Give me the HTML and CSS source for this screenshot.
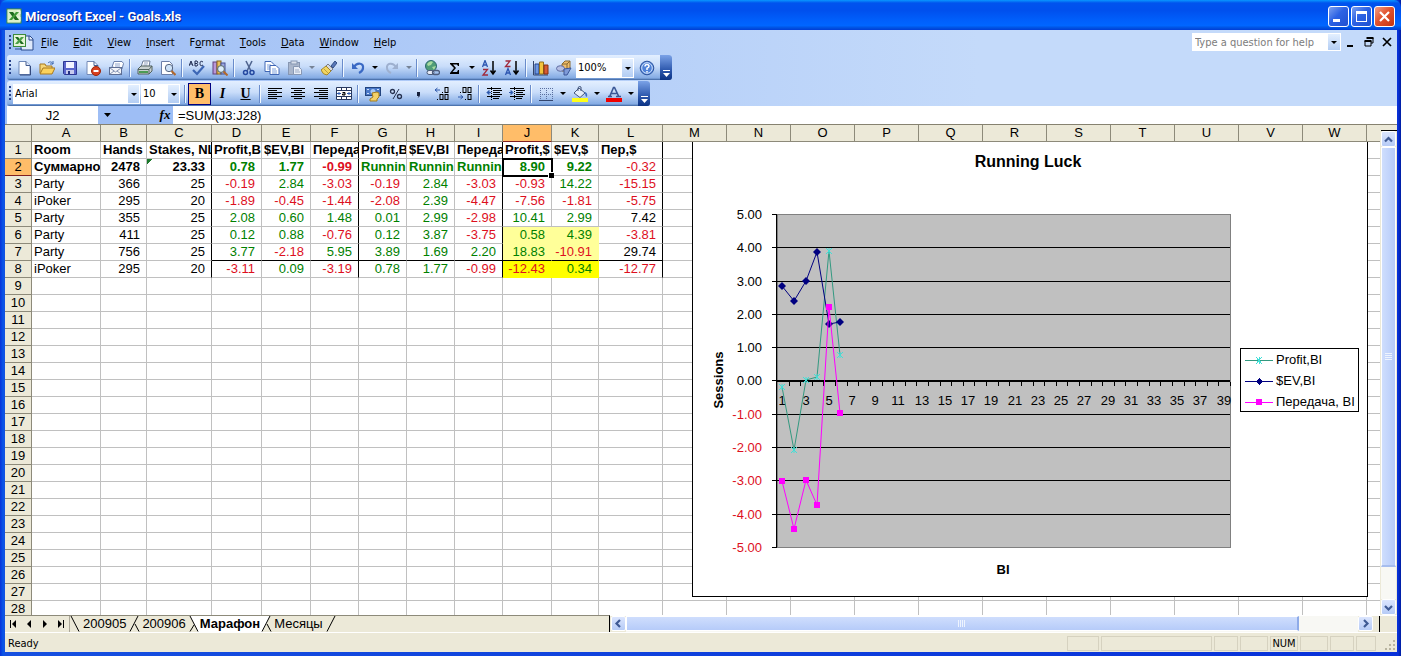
FILE: index.html
```html
<!DOCTYPE html>
<html lang="en">
<head>
<meta charset="utf-8">
<title>Microsoft Excel - Goals.xls</title>
<link rel="stylesheet" href="styles.css">
</head>
<body>
<div class="window">
  <header class="titlebar">
    <svg class="app-icon" viewBox="0 0 16 16"><rect x="1" y="1" width="14" height="14" fill="#fff" stroke="#3f8f3c"/><rect x="2" y="2" width="12" height="12" fill="#d8f0c8"/><path d="M3 4h4l6 8H9z" fill="#1d6b1f"/><path d="M10 4h3l-7 8H3z" fill="#3f9a3a"/><path d="M11 3h3v3M11 9h3v4" stroke="#f1f7e6" fill="none"/></svg>
    <h1 class="title">Microsoft Excel - Goals.xls</h1>
    <button class="winbtn" aria-label="Minimize"><svg viewBox="0 0 21 21"><path d="M5 13h7v3H5z" fill="#fff"/></svg></button>
    <button class="winbtn" aria-label="Maximize"><svg viewBox="0 0 21 21"><path d="M5 5h11v11H5zM6 8v7h9V8z" fill="#fff" fill-rule="evenodd"/></svg></button>
    <button class="winbtn close" aria-label="Close"><svg viewBox="0 0 21 21"><path d="M6 6l9 9M15 6l-9 9" stroke="#fff" stroke-width="2.2"/></svg></button>
  </header>

  <nav class="menubar">
    <span class="grip"></span>
    <svg class="doc-icon" viewBox="0 0 22 18"><path d="M9 3h9l3 3v11H9z" fill="#dfe9fb" stroke="#2b4a8c"/><path d="M17 3v4h4" fill="none" stroke="#2b4a8c"/><rect x="1.500" y="1.500" width="12" height="12" fill="#e4f3d6" stroke="#3c8a3c"/><path d="M3 4h3l6 7H9z" fill="#1d6b1f"/><path d="M9 4h3l-6 7H3z" fill="#4aa045"/><path d="M3 16h7" stroke="#2b4a8c"/></svg>
    <button class="menu"><u>F</u>ile</button><button class="menu"><u>E</u>dit</button><button class="menu"><u>V</u>iew</button><button class="menu"><u>I</u>nsert</button><button class="menu">F<u>o</u>rmat</button><button class="menu"><u>T</u>ools</button><button class="menu"><u>D</u>ata</button><button class="menu"><u>W</u>indow</button><button class="menu"><u>H</u>elp</button>
    <div class="ask"><input class="ask-input" type="text" aria-label="Type a question for help" placeholder="Type a question for help"><button class="drop" aria-label="Recent questions"><i class="caret"></i></button></div>
    <button class="docbtn" aria-label="Minimize workbook"><svg viewBox="0 0 10 10"><path d="M1 8h6v2H1z"/></svg></button>
    <button class="docbtn" aria-label="Restore workbook"><svg viewBox="0 0 10 10"><path d="M3 1h6v5H7M1 4h6v5H1z" fill="none" stroke="#000"/><path d="M2.500 1h7M.5 4h7" stroke="#000" stroke-width="2"/></svg></button>
    <button class="docbtn" aria-label="Close workbook"><svg viewBox="0 0 10 10"><path d="M1 1l8 8M9 1L1 9" stroke="#000" stroke-width="1.700"/></svg></button>
  </nav>

  <div class="bars">
    <div class="toolbar" role="toolbar" aria-label="Standard">
      <span class="grip"></span>
      <button class="tb" aria-label="New"><svg viewBox="0 0 16 16"><path d="M3 1.500h7l4 4v9H3z" fill="#fff" stroke="#6c87b8"/><path d="M10 1.500v4h4" fill="#dbe6f8" stroke="#445c8f"/><path d="M14.500 6v9H4" fill="none" stroke="#33497c"/></svg></button>
      <button class="tb" aria-label="Open"><svg viewBox="0 0 16 16"><path d="M1 13V4h5l1 2h6v3" fill="#f5d678" stroke="#a8791e"/><path d="M1 14l3-6h12l-3 6z" fill="#fbd25c" stroke="#a8791e"/><path d="M9 3c2-2 4-1 5 1m0-3v3h-3" fill="none" stroke="#3d66ad"/></svg></button>
      <button class="tb" aria-label="Save"><svg viewBox="0 0 16 16"><path d="M1.500 1.500h13v13h-12l-1-1z" fill="#5a66cc" stroke="#2c3692"/><rect x="4" y="2" width="8" height="6" fill="#f3f4ff"/><rect x="4" y="10" width="8" height="4" fill="#c7cbee"/><rect x="6" y="11" width="2" height="3" fill="#23307f"/></svg></button>
      <button class="tb" aria-label="Permission"><svg viewBox="0 0 16 16"><path d="M2 1.500h7l4 4v9H2z" fill="#fff" stroke="#7389b6"/><path d="M9 1.500v4h4" fill="none" stroke="#445c8f"/><circle cx="11" cy="11" r="4.500" fill="#d8401f" stroke="#9d2408"/><path d="M8.500 11h5" stroke="#fff" stroke-width="2"/></svg></button>
      <button class="tb" aria-label="E-mail"><svg viewBox="0 0 16 16"><path d="M4 7l2-5.500h8l1.500 2L14 9z" fill="#fff" stroke="#6980ad"/><path d="M7 4h5M7 6h5" stroke="#8fa4cc"/><rect x="1.500" y="7.500" width="12" height="7" fill="#f2f4f9" stroke="#5d6e94"/><path d="M2 8l5.500 4L13 8M2 14l4-3m7 3l-4-3" fill="none" stroke="#8492b2"/></svg></button>
      <span class="sep"></span>
      <button class="tb" aria-label="Print"><svg viewBox="0 0 16 16"><path d="M4 7l2-6h7l-1 6z" fill="#fff" stroke="#6c7c98"/><path d="M7 3h4M6.500 5h4" stroke="#8fa0c0"/><path d="M1 9l3-3h11v5l-3 3H1z" fill="#c9d1d0" stroke="#52635f"/><path d="M1 9.500h11V14M12 9.500L15 6" fill="none" stroke="#52635f"/><path d="M2 12h9" stroke="#4c9b54" stroke-width="2"/></svg></button>
      <button class="tb" aria-label="Print Preview"><svg viewBox="0 0 16 16"><path d="M1.500 1.500h8l3 3v10h-11z" fill="#fff" stroke="#6c7fa8"/><circle cx="9" cy="8" r="3.700" fill="#cfe3f8" stroke="#54647f"/><path d="M11.500 11l4 4" stroke="#b0682d" stroke-width="2.200"/></svg></button>
      <span class="sep"></span>
      <button class="tb" aria-label="Spelling"><svg viewBox="0 0 16 16"><path d="M0 6l2-5 2 5M1 4h2M6 1v5h2q1.500-1.300 0-2.500 1.500-1.300 0-2.500H6m2 2.500H6M14 2q-3-2-3 1.500T14 5" fill="none" stroke="#1e2b50"/><path d="M4 10l4 4 7-8" fill="none" stroke="#3c66b5" stroke-width="2.200"/></svg></button>
      <button class="tb" aria-label="Research"><svg viewBox="0 0 16 16"><rect x="1" y="2" width="4" height="12" fill="#b896d8" stroke="#61407e"/><rect x="5" y="1" width="4" height="13" fill="#e8bf5f" stroke="#87651c"/><rect x="9" y="3" width="4" height="11" fill="#9aa6df" stroke="#454e92"/><circle cx="9" cy="9" r="3.400" fill="#dceefa" stroke="#566"/><path d="M11.500 11.500l4 4" stroke="#b3692b" stroke-width="2"/></svg></button>
      <span class="sep"></span>
      <button class="tb" aria-label="Cut"><svg viewBox="0 0 16 16"><path d="M5 1l5 10M11 1L6 11" stroke="#506590" stroke-width="1.600"/><circle cx="4.500" cy="12.500" r="2" fill="none" stroke="#2448a0" stroke-width="1.500"/><circle cx="11" cy="12.500" r="2" fill="none" stroke="#2448a0" stroke-width="1.500"/></svg></button>
      <button class="tb" aria-label="Copy"><svg viewBox="0 0 16 16"><path d="M1 1.500h6l3 3v7H1z" fill="#fff" stroke="#3f66b5"/><path d="M3 5h4M3 7h4M3 9h3" stroke="#7fa0dc"/><path d="M6 5.500h6l3 3v6H6z" fill="#fff" stroke="#3f66b5"/><path d="M8 9h4M8 11h5M8 13h5" stroke="#7fa0dc"/></svg></button>
      <button class="tb" aria-label="Paste"><svg viewBox="0 0 16 16"><rect x="1.500" y="2.500" width="11" height="12" fill="#aab6cb" stroke="#8797b3"/><rect x="4" y="1" width="6" height="3" fill="#d8dfeb" stroke="#8797b3"/><path d="M6.500 6.500h5l3 3v5h-8z" fill="#e9eef7" stroke="#8797b3"/><path d="M8 10h4M8 12h5" stroke="#9dabc4"/></svg></button>
      <button class="tb-drop" aria-label="Paste options" disabled><i class="caret"></i></button>
      <button class="tb" aria-label="Format Painter"><svg viewBox="0 0 16 16"><path d="M10 6l4-5 2 2-4 5z" fill="#5877b8" stroke="#344f86"/><path d="M7 4l5 5-2 2-5-5z" fill="#d5d9e0" stroke="#7b7f88"/><path d="M5 6l5 5-4 4q-4 0-6-5z" fill="#f2d662" stroke="#a3862a"/><path d="M3 9l4 4" stroke="#c0a03c"/></svg></button>
      <span class="sep"></span>
      <button class="tb" aria-label="Undo"><svg viewBox="0 0 16 16"><path d="M4 7c3-5 10-4 9 1 0 3-2 4-4 5" fill="none" stroke="#3a69c4" stroke-width="2.200"/><path d="M2 3v6h6z" fill="#3a69c4"/></svg></button>
      <button class="tb-drop" aria-label="Undo list"><i class="caret"></i></button>
      <button class="tb" aria-label="Redo"><svg viewBox="0 0 16 16"><path d="M12 7C9 2 2 3 3 8c0 3 2 4 4 5" fill="none" stroke="#9eb0cf" stroke-width="2"/><path d="M14 3v6H8z" fill="#9eb0cf"/></svg></button>
      <button class="tb-drop" aria-label="Redo list" disabled><i class="caret"></i></button>
      <span class="sep"></span>
      <button class="tb" aria-label="Insert Hyperlink"><svg viewBox="0 0 16 16"><circle cx="7" cy="6" r="5.500" fill="#4f9d78" stroke="#2d6a70"/><path d="M3 4q3-4 6-2l-2 3-3 1zM8 7l4-1-2 4z" fill="#a8dba0"/><rect x="3" y="10.500" width="7" height="4" rx="2" fill="#e6ebf5" stroke="#4d5c7c"/><rect x="8.500" y="10.500" width="7" height="4" rx="2" fill="none" stroke="#4d5c7c" stroke-width="1.300"/></svg></button>
      <button class="tb" aria-label="AutoSum"><svg viewBox="0 0 16 16"><path d="M3 3h9v3h-1l-1-1.500H6L9 8l-3.500 4H10l1-2h1v4H3v-1l4-5-4-4z"/></svg></button>
      <button class="tb-drop" aria-label="AutoSum list"><i class="caret"></i></button>
      <button class="tb" aria-label="Sort Ascending"><svg viewBox="0 0 16 16"><path d="M1.500 7L4 .5 6.500 7M2.500 5h3" fill="none" stroke="#2c55b0" stroke-width="1.300"/><path d="M2 9.500h4.500L2 15h5" fill="none" stroke="#a12a3c" stroke-width="1.300"/><path d="M12 1v12M9.500 10.500L12 14l2.500-3.500" fill="none" stroke="#000" stroke-width="1.500"/></svg></button>
      <button class="tb" aria-label="Sort Descending"><svg viewBox="0 0 16 16"><path d="M1.500 1H6L1.500 6.500h5" fill="none" stroke="#a12a3c" stroke-width="1.300"/><path d="M1.500 15L4 8.500 6.500 15M2.500 13h3" fill="none" stroke="#2c55b0" stroke-width="1.300"/><path d="M12 1v12M9.500 10.500L12 14l2.500-3.500" fill="none" stroke="#000" stroke-width="1.500"/></svg></button>
      <span class="sep"></span>
      <button class="tb" aria-label="Chart Wizard"><svg viewBox="0 0 16 16"><path d="M.5 1v14H15" fill="none" stroke="#33446a"/><path d="M2 4h4v10H2z" fill="#6f98e2" stroke="#24458b"/><path d="M6.500 2h4v12h-4z" fill="#f3c33c" stroke="#94701b"/><path d="M11 5h4v9h-4z" fill="#d65a34" stroke="#87300f"/></svg></button>
      <button class="tb" aria-label="Drawing"><svg viewBox="0 0 16 16"><path d="M6 4l3-3h5v7l-3 3H6z" fill="#f0bd6a" stroke="#8a6a30"/><path d="M6 4h5v7M11 4l3-3" fill="none" stroke="#8a6a30"/><ellipse cx="4.500" cy="8.500" rx="4" ry="2.800" fill="#b5bfe4" stroke="#5f6ca3"/><path d="M8 9l7-1-4 7H8z" fill="#7e9ad8" stroke="#3a5597"/></svg></button>
      <span class="combo zoom"><select class="select" aria-label="Zoom"><option>100%</option></select></span>
      <button class="tb" aria-label="Help"><svg viewBox="0 0 16 16"><circle cx="8" cy="8" r="6.800" fill="#4f82d8" stroke="#2e549e"/><circle cx="8" cy="8" r="5.300" fill="none" stroke="#d5e4fb"/><path d="M6 6.500q0-2 2-2t2 1.800Q10 7.500 8 8.300V10M8 11v1.500" fill="none" stroke="#fff" stroke-width="1.500"/></svg></button>
      <button class="overflow" aria-label="Standard toolbar options"><svg viewBox="0 0 7 7"><path d="M0 .5h7" stroke="#fff"/><path d="M0 3h7L3.500 7z" fill="#fff"/></svg></button>
    </div>

    <div class="toolbar" role="toolbar" aria-label="Formatting">
      <span class="grip"></span>
      <span class="combo font"><select class="select" aria-label="Font"><option>Arial</option></select></span>
      <span class="combo size"><select class="select" aria-label="Font size"><option>10</option></select></span>
      <span class="sep"></span>
      <button class="tb on letter bold" aria-label="Bold">B</button>
      <button class="tb letter italic" aria-label="Italic">I</button>
      <button class="tb letter under" aria-label="Underline">U</button>
      <span class="sep"></span>
      <button class="tb" aria-label="Align Left"><svg viewBox="0 0 16 16"><path d="M1 2.500h14M1 4.500h9M1 6.500h14M1 8.500h9M1 10.500h14M1 12.500h9" stroke="#000"/></svg></button>
      <button class="tb" aria-label="Center"><svg viewBox="0 0 16 16"><path d="M1 2.500h14M4 4.500h8M1 6.500h14M4 8.500h8M1 10.500h14M4 12.500h8" stroke="#000"/></svg></button>
      <button class="tb" aria-label="Align Right"><svg viewBox="0 0 16 16"><path d="M1 2.500h14M6 4.500h9M1 6.500h14M6 8.500h9M1 10.500h14M6 12.500h9" stroke="#000"/></svg></button>
      <button class="tb" aria-label="Merge and Center"><svg viewBox="0 0 16 16"><path d="M.5 1.500h15v12H.5zM.5 4.500h15M.5 10.500h15M5.500 1v3M10.500 1v3M5.500 11v3M10.500 11v3" fill="#fff" stroke="#28385e"/><path d="M1 7.500h4M11 7.500h4M3 6v3M13 6v3" stroke="#2c58ac"/><path d="M6.500 6.500h2.500v2.500H6.500V8H9" fill="none" stroke="#000"/></svg></button>
      <span class="sep"></span>
      <button class="tb" aria-label="Currency Style"><svg viewBox="0 0 16 16"><rect x=".5" y="1.500" width="15" height="8" fill="#4a78c8" stroke="#23457f"/><circle cx="8" cy="5.500" r="2.500" fill="#a6c7f2"/><path d="M2 3.500h2M12 3.500h2M2 7.500h2" stroke="#c9defb"/><path d="M7 7l5-1 2 1v4l-2 2v2H5v-2l3-2z" fill="#f4d169" stroke="#a37c1d"/></svg></button>
      <button class="tb" aria-label="Percent Style"><svg viewBox="0 0 16 16"><circle cx="4.500" cy="5.500" r="2" fill="none" stroke="#26314e" stroke-width="1.300"/><circle cx="11.500" cy="10.500" r="2" fill="none" stroke="#26314e" stroke-width="1.300"/><path d="M11 3L5 13" stroke="#26314e"/></svg></button>
      <button class="tb" aria-label="Comma Style"><svg viewBox="0 0 16 16"><path d="M6 6h3v3q0 2-2.500 3 1-1 1-2H6z" fill="#16203c"/></svg></button>
      <button class="tb" aria-label="Increase Decimal"><svg viewBox="0 0 16 16"><path d="M1 4h5M3.500 2L1 4l2.500 2" fill="none" stroke="#2c58ac"/><path d="M8 6.500h1M3 13.500h1" stroke="#000"/><rect x="11" y="1.500" width="3" height="5" fill="none" stroke="#000"/><rect x="6" y="8.500" width="3" height="5" fill="none" stroke="#000"/><rect x="11" y="8.500" width="3" height="5" fill="none" stroke="#000"/></svg></button>
      <button class="tb" aria-label="Decrease Decimal"><svg viewBox="0 0 16 16"><path d="M1 11h5M3.500 9L6 11l-2.500 2" fill="none" stroke="#2c58ac"/><path d="M3 6.500h1M8 13.500h1" stroke="#000"/><rect x="6" y="1.500" width="3" height="5" fill="none" stroke="#000"/><rect x="11" y="1.500" width="3" height="5" fill="none" stroke="#000"/><rect x="11" y="8.500" width="3" height="5" fill="none" stroke="#000"/></svg></button>
      <span class="sep"></span>
      <button class="tb" aria-label="Decrease Indent"><svg viewBox="0 0 16 16"><path d="M1 2.500h14M7 4.500h9M7 6.500h7M7 8.500h9M1 10.500h13M7 12.500h6" stroke="#000"/><path d="M5.500 1v14" stroke="#000" stroke-dasharray="1 1"/><path d="M5 6.500H1M3 4.500L1 6.500l2 2z" fill="#2c58ac" stroke="#2c58ac"/></svg></button>
      <button class="tb" aria-label="Increase Indent"><svg viewBox="0 0 16 16"><path d="M1 2.500h14M7 4.500h9M7 6.500h7M7 8.500h9M1 10.500h13M7 12.500h6" stroke="#000"/><path d="M5.500 1v14" stroke="#000" stroke-dasharray="1 1"/><path d="M0 6.500h3M2 4.500l2 2-2 2z" fill="#2c58ac" stroke="#2c58ac"/></svg></button>
      <span class="sep"></span>
      <button class="tb" aria-label="Borders"><svg viewBox="0 0 16 16"><path d="M2 2.500h12M2 8.500h12M2.500 2v12M8.500 2v12M14.500 2v12" stroke="#5a6f9e" stroke-dasharray="1 1"/><path d="M1 14.500h14" stroke="#33466f"/></svg></button>
      <button class="tb-drop" aria-label="Border styles"><i class="caret"></i></button>
      <button class="tb" aria-label="Fill Color"><svg viewBox="0 0 16 16"><path d="M2 7l5-5 6 5-5 4.500z" fill="#e5edf9" stroke="#44577d"/><path d="M6 5V2q1-3 3-1v4" fill="none" stroke="#44577d"/><path d="M12 6q4 0 3 5-2-1-2-4z" fill="#3d6fc0"/><path d="M0 12h16v4H0z" fill="#ffff19"/></svg></button>
      <button class="tb-drop" aria-label="Fill colors"><i class="caret"></i></button>
      <button class="tb" aria-label="Font Color"><svg viewBox="0 0 16 16"><path d="M3.500 11l4-9.500h1L13 11M5.500 7.500h5M2 10.500h4M10 10.500h5" fill="none" stroke="#3a5796" stroke-width="1.600"/><path d="M0 12h16v4H0z" fill="#f00000"/></svg></button>
      <button class="tb-drop" aria-label="Font colors"><i class="caret"></i></button>
      <button class="overflow" aria-label="Formatting toolbar options"><svg viewBox="0 0 7 7"><path d="M0 .5h7" stroke="#fff"/><path d="M0 3h7L3.500 7z" fill="#fff"/></svg></button>
    </div>
  </div>

  <div class="formula">
    <input class="namebox" type="text" value="J2" aria-label="Name Box">
    <button class="name-drop" aria-label="Names"><svg viewBox="0 0 7 4"><path d="M0 0h7L3.500 4z"/></svg></button>
    <button class="fx" aria-label="Insert Function">fx</button>
    <input class="fx-input" type="text" value="=SUM(J3:J28)" aria-label="Formula">
  </div>

  <main class="work">
    <div class="sheet">
      <table class="grid" id="grid"></table>
      <svg class="chart" viewBox="692 142 676 455" role="img" aria-label="Running Luck chart">
        <path d="M692 142h676v455H692z" fill="#fff"/>
        <path d="M692.500 142v454.500h675V142" fill="none" stroke="#000"/>
        <text class="c-title" x="1028" y="167">Running Luck</text>
        <path d="M777 214.500h453.500v333H777z" fill="#c0c0c0" stroke="#808080"/>
        <path d="M777 247.500h453M777 281.500h453M777 314.500h453M777 347.500h453M777 414.500h453M777 447.500h453M777 480.500h453M777 514.500h453M776.500 214v334M772 214.500h5M772 247.500h5M772 281.500h5M772 314.500h5M772 347.500h5M772 380.500h5M772 414.500h5M772 447.500h5M772 480.500h5M772 514.500h5M772 547.500h5" stroke="#000"/>
        <path d="M777 381h453" stroke="#000" stroke-width="2"/>
        <path id="ticks" stroke="#000" fill="none"/>
        <g class="c-y"><text x="762" y="219">5.00</text><text x="762" y="252">4.00</text><text x="762" y="286">3.00</text><text x="762" y="319">2.00</text><text x="762" y="352">1.00</text><text x="762" y="385">0.00</text><g class="c-neg"><text x="762" y="419">-1.00</text><text x="762" y="452">-2.00</text><text x="762" y="485">-3.00</text><text x="762" y="519">-4.00</text><text x="762" y="552">-5.00</text></g></g>
        <g class="c-x" id="xlabels"></g>
        <text class="c-axis" transform="rotate(-90 723 380)" x="723" y="380">Sessions</text>
        <text class="c-axis" x="1003" y="574">BI</text>
        <g id="series"></g>
        <rect x="1240.500" y="348.500" width="118" height="63" fill="#fff" stroke="#000"/>
        <path d="M1245 360.500h28" stroke="#339980"/><path d="M1256 357l6 7M1262 357l-6 7M1259 357v7" stroke="#40e0d8"/>
        <path d="M1245 381.500h28" stroke="#000080"/><path d="M1259 378l3.500 3.500-3.500 3.500-3.500-3.500z" fill="#000080"/>
        <path d="M1245 402.500h28" stroke="#f0f"/><path d="M1256 399h6v6h-6z" fill="#f0f"/>
        <g class="c-leg"><text x="1276" y="364">Profit,BI</text><text x="1276" y="385">$EV,BI</text><text x="1276" y="406">Передача, BI</text></g>
      </svg>
    </div>
    <div class="vscroll">
      <span class="vsplit"></span>
      <button class="arrow" aria-label="Scroll up"><svg viewBox="0 0 9 9"><path d="M1 6.500L4.500 3 8 6.500" class="chev"/></svg></button>
      <div class="vtrack"><div class="thumb vthumb"><svg viewBox="0 0 7 8"><path d="M0 .5h7M0 2.500h7M0 4.500h7M0 6.500h7" stroke="#eef4fe"/></svg></div></div>
      <button class="arrow" aria-label="Scroll down"><svg viewBox="0 0 9 9"><path d="M1 3l3.500 3.500L8 3" class="chev"/></svg></button>
    </div>
  </main>

  <div class="bottom">
    <div class="tabs">
      <div class="tabnav">
        <button aria-label="First sheet"><svg viewBox="0 0 8 8"><path d="M1 0h1v8H1zM7 0v8L3 4z"/></svg></button>
        <button aria-label="Previous sheet"><svg viewBox="0 0 8 8"><path d="M6 0v8L2 4z"/></svg></button>
        <button aria-label="Next sheet"><svg viewBox="0 0 8 8"><path d="M2 0v8l4-4z"/></svg></button>
        <button aria-label="Last sheet"><svg viewBox="0 0 8 8"><path d="M1 0v8l4-4zM6 0h1v8H6z"/></svg></button>
      </div>
      <svg class="slant" viewBox="0 0 12 16"><path d="M.5 0v16" stroke="#aca899"/><path d="M2 0l8 15.500" stroke="#000" fill="none"/></svg>
      <button class="tab">200905</button>
      <svg class="slant" viewBox="0 0 12 16"><path d="M10 0L2 15.500" stroke="#000"/><path d="M7 8l4 7.500" stroke="#000"/></svg>
      <button class="tab">200906</button>
      <svg class="slant" viewBox="0 0 12 16"><path d="M2 0h10v16h-2z" fill="#fff"/><path d="M2 0l8 15.500M6 9l-4 6.500" stroke="#000"/></svg>
      <button class="tab active">Марафон</button>
      <svg class="slant" viewBox="0 0 12 16"><path d="M0 0h10L2 16H0z" fill="#fff"/><path d="M10 0L2 15.500M7 8l4 7.500" stroke="#000"/></svg>
      <button class="tab">Месяцы</button>
      <svg class="slant" viewBox="0 0 12 16"><path d="M10 0L2 15.500" stroke="#000"/></svg>
    </div>
    <div class="hscroll">
      <button class="arrow" aria-label="Scroll left"><svg viewBox="0 0 9 9"><path d="M6 1L2.500 4.500 6 8" class="chev"/></svg></button>
      <div class="htrack"><div class="thumb hthumb"><svg viewBox="0 0 8 7"><path d="M.5 0v7M2.500 0v7M4.500 0v7M6.500 0v7" stroke="#eef4fe"/></svg></div></div>
      <button class="arrow" aria-label="Scroll right"><svg viewBox="0 0 9 9"><path d="M3 1l3.500 3.500L3 8" class="chev"/></svg></button>
      <span class="hsplit"></span>
    </div>
  </div>

  <footer class="status">
    <span class="ready">Ready</span>
    <span class="pane w32"></span><span class="pane w111"></span><span class="pane w24"></span><span class="pane w28"></span><span class="pane w28">NUM</span><span class="pane w28"></span><span class="pane w24"></span><span class="pane w20"></span>
    <svg class="resize" viewBox="0 0 12 12"><path d="M9 1h2v2H9zM5 5h2v2H5zM9 5h2v2H9zM1 9h2v2H1zM5 9h2v2H5zM9 9h2v2H9z" fill="#b8b4a0"/></svg>
  </footer>
</div>
<script src="sheet.js"></script>
</body>
</html>
```

FILE: styles.css
```css
* { box-sizing: border-box; }
body { margin: 0; background: #0831d9; font-family: "DejaVu Sans Condensed", "Open Sans", sans-serif; font-size: 11px; color: #000; }
button, input, select { font: inherit; color: inherit; margin: 0; padding: 0; border: 0; background: none; border-radius: 0; outline: 0; }
button { display: flex; align-items: center; justify-content: center; flex: none; }
svg { display: block; flex: none; }

.window { height: 100vh; display: flex; flex-direction: column; padding: 0 4px 4px 5px; background: linear-gradient(90deg, #0831d9 0, #0855e8 3px, #1650e0 5px, #0831d9 calc(100% - 3px), #001ea0 100%); }

.titlebar { flex: none; height: 30px; display: flex; align-items: center; gap: 2px; margin: 0 -4px 0 -5px; padding: 2px 6px 0 6px; border-radius: 7px 7px 0 0; background: linear-gradient(#0997ff 0, #0053ee 10%, #0050ee 35%, #0060fc 70%, #0066ff 85%, #0051e0 93%, #003dd7 100%); }
.app-icon { width: 16px; height: 16px; }
.title { flex: 1; margin: 0 0 0 1px; font: bold 13px Roboto, sans-serif; color: #fff; text-shadow: 1px 1px #0a1883; }
.winbtn { width: 21px; height: 21px; border: 1px solid #fff; border-radius: 3px; background: linear-gradient(135deg, #7da1f0, #2c62e4 45%, #2050d0); }
.winbtn svg { width: 21px; height: 21px; }
.winbtn.close { background: linear-gradient(135deg, #f0a088, #e2532e 45%, #c43410); }

.menubar { flex: none; height: 25px; display: flex; align-items: center; padding: 0 1px 1px 4px; background: linear-gradient(90deg, #9ebef5, #c4dafa 70%); }
.grip { flex: none; width: 2px; height: 15px; margin-right: 1px; background: repeating-linear-gradient(#27418c 0 2px, transparent 2px 4px); }
.doc-icon { width: 22px; height: 18px; }
.menu { padding: 0 8px 0 7px; height: 20px; }
.ask { display: flex; margin-left: auto; margin-right: 1px; width: 149px; height: 18px; border: 1px solid #fff; background: #fff; }
.ask-input { flex: 1; min-width: 0; padding-left: 2px; }
.ask-input::placeholder { color: #7c7c7c; opacity: 1; }
.drop { width: 12px; background: linear-gradient(#e3efff, #b3cdf3); }
.caret { width: 0; height: 0; border: 3px solid transparent; border-top-color: #000; border-bottom: 0; }
.docbtn { width: 18px; height: 18px; }
.docbtn svg { width: 10px; height: 10px; }

.bars { flex: none; display: flex; flex-direction: column; align-items: flex-start; gap: 1px; padding: 0 2px; background: linear-gradient(90deg, #9ebef5, #c4dafa 70%); }
.toolbar { display: flex; align-items: center; height: 25px; padding-left: 2px; border-radius: 3px; background: linear-gradient(#e3efff, #c9ddfa 45%, #84abe4 92%, #3b619c 100%); }
.tb { width: 23px; height: 22px; }
.tb svg { width: 16px; height: 16px; }
.tb-drop { width: 11px; height: 22px; }
.tb-drop:disabled { opacity: .4; }
.sep { flex: none; width: 6px; height: 18px; background: linear-gradient(90deg, transparent 2px, #6a8ccb 2px 3px, #f1f9ff 3px 4px, transparent 4px); }
.combo { position: relative; display: flex; height: 20px; background: #fff; margin-left: 1px; }
.combo::after { content: ""; position: absolute; right: 1px; top: 1px; width: 11px; height: 18px; pointer-events: none; background: linear-gradient(#e3efff, #b3cdf3); }
.combo::before { content: ""; position: absolute; z-index: 1; right: 3px; top: 9px; border: 3px solid transparent; border-top-color: #000; border-bottom: 0; pointer-events: none; }
.select { appearance: none; width: 100%; padding-left: 2px; }
.font { width: 127px; }
.size { width: 39px; margin-right: 2px; }
.zoom { width: 58px; margin-right: 1px; }
.on { background: #ffbd69; border: 1px solid #000080; }
.letter { font: bold 14px "Liberation Serif", serif; }
.italic { font-style: italic; }
.under { text-decoration: underline; }
.overflow { align-self: stretch; width: 12px; margin-left: 2px; align-items: flex-end; padding-bottom: 3px; border-radius: 0 3px 3px 0; background: linear-gradient(#7ba2e7, #2d58ad 60%, #0b3283); }
.overflow svg { width: 7px; height: 7px; }

.formula { flex: none; display: flex; height: 18px; padding-left: 2px; background: #9ebef5; font: 13px "Liberation Sans", sans-serif; }
.namebox { width: 91px; text-align: center; background: #fff; }
.name-drop { width: 19px; }
.name-drop svg { width: 7px; height: 4px; }
.fx { margin-left: 40px; width: 16px; font: italic bold 13px "Liberation Serif", serif; }
.fx-input { flex: 1; min-width: 0; padding-left: 5px; background: #fff; }

.work { flex: 1; min-height: 0; display: grid; grid-template-columns: 1fr 17px; background: #ece9d8; border-top: 1px solid #868270; }
.sheet { position: relative; overflow: hidden; background: #fff; font: 13px "Liberation Sans", sans-serif; }
.grid { width: 1426px; table-layout: fixed; border-spacing: 0; line-height: 16px; }
.grid th, .grid td { height: 17px; padding: 0 2px; overflow: hidden; white-space: nowrap; border-right: 1px solid #c0c0c0; border-bottom: 1px solid #c0c0c0; font-weight: normal; text-align: left; }
.grid th { background: #ece9d8; border-color: #8d8a7a; text-align: center; }
.grid tbody th { padding: 0; }
.grid th.hot { background: #ffbd69; border-bottom-color: #802020; }
.grid td.n { text-align: right; padding-right: 6px; }
.grid td.b { font-weight: bold; }
.grid td.g { color: #008000; }
.grid td.r { color: #dd0f1e; }
.grid td.edge { border-right-color: #000; }
.grid td.line { border-bottom-color: #000; }
.grid td.pale { background: #ffff99; border-color: #ffff99; }
.grid td.line.pale { border-bottom-color: #000; }
.grid td.hi { background: #ffff00; border-color: #ffff00; }
.grid td.flag { background: linear-gradient(135deg, #1c7a2c 4px, transparent 4px); }
.grid td.sel { position: relative; overflow: visible; outline: 2px solid #000; outline-offset: -1px; }
.grid td.sel::after { content: ""; position: absolute; right: -3px; bottom: -3px; width: 5px; height: 5px; background: #000; border: 1px solid #fff; border-width: 1px 0 0 1px; }
.chart { position: absolute; left: 687px; top: 17px; width: 676px; height: 455px; }
.chart path { shape-rendering: crispEdges; }
.chart text { font-size: 13px; }
.chart .c-title { font-size: 16px; font-weight: bold; text-anchor: middle; }
.c-axis { font-weight: bold; text-anchor: middle; }
.c-y { text-anchor: end; }
.c-neg { fill: #dd0f1e; }
.c-x { text-anchor: middle; }
.chart .smooth { shape-rendering: auto; }

.vscroll { display: flex; flex-direction: column; padding-left: 1px; background: #ece9d8; }
.vsplit { flex: none; height: 6px; border-bottom: 1px solid #000; }
.arrow { width: 15px; height: 16px; border: 1px solid #fff; border-radius: 2px; background: linear-gradient(#dbe5fe, #b6cbf6); }
.arrow svg { width: 9px; height: 9px; }
.chev { fill: none; stroke: #3f5a94; stroke-width: 2.2; }
.vtrack { flex: 1; min-height: 0; width: 15px; background: #f8f8f4; }
.thumb { display: flex; align-items: center; justify-content: center; border: 1px solid #fff; outline: 0; background: #bfd2fb; }
.vthumb { height: 93%; background: linear-gradient(90deg, #cfdefd, #b6cbf9); border-bottom: 2px solid #a6bdee; }
.vthumb svg { width: 7px; height: 8px; }

.bottom { flex: none; display: grid; grid-template-columns: 605fr 787fr; height: 17px; background: #ece9d8; }
.tabs { display: flex; border-top: 1px solid #8d8a7a; border-right: 1px solid #000; font: 13px "Liberation Sans", sans-serif; }
.tabnav { display: flex; width: 64px; }
.tabnav button { width: 16px; }
.tabnav svg { width: 8px; height: 8px; }
.slant { width: 12px; height: 16px; }
.tab { padding: 0 2px 1px; height: 16px; }
.tab.active { font-weight: bold; background: #fff; padding: 0 0 1px; }
.hscroll { display: flex; padding: 0 17px 0 1px; border-top: 1px solid #fff; }
.hscroll .arrow { height: 15px; }
.htrack { flex: 1; min-width: 0; background: #f8f8f4; }
.hthumb { width: 92%; height: 15px; background: linear-gradient(#cfdefd, #b6cbf9); border-right: 2px solid #8fabe8; }
.hthumb svg { width: 8px; height: 7px; }
.hsplit { width: 7px; border-right: 1px solid #000; }

.status { flex: none; display: flex; align-items: center; gap: 2px; height: 20px; padding: 2px 1px 1px 3px; background: #ece9d8; border-top: 1px solid #fff; }
.ready { flex: 1; }
.pane { display: flex; align-items: center; justify-content: center; height: 15px; border: 1px solid #d6d2c0; }
.w20 { width: 20px; }
.w24 { width: 24px; }
.w28 { width: 28px; }
.w32 { width: 32px; }
.w111 { width: 111px; }
.resize { width: 12px; height: 12px; margin-left: 6px; align-self: flex-end; }
```

FILE: sheet.js
```js
const widths = [27, 69, 46, 65, 50, 49, 48, 48, 48, 48, 49, 47, 64].concat(Array(12).fill(64));
const letters = 'ABCDEFGHIJKLMNOPQRSTUVW'.split('').concat('');
const rows = [
  ['Room', 'Hands', 'Stakes, NL', 'Profit,BI', '$EV,BI', 'Передача', 'Profit,BI', '$EV,BI', 'Передача', 'Profit,$', '$EV,$', 'Пер,$'],
  ['Суммарно', '2478', '23.33', '0.78', '1.77', '-0.99', 'Running', 'Running', 'Running', '8.90', '9.22', '-0.32'],
  ['Party', '366', '25', '-0.19', '2.84', '-3.03', '-0.19', '2.84', '-3.03', '-0.93', '14.22', '-15.15'],
  ['iPoker', '295', '20', '-1.89', '-0.45', '-1.44', '-2.08', '2.39', '-4.47', '-7.56', '-1.81', '-5.75'],
  ['Party', '355', '25', '2.08', '0.60', '1.48', '0.01', '2.99', '-2.98', '10.41', '2.99', '7.42'],
  ['Party', '411', '25', '0.12', '0.88', '-0.76', '0.12', '3.87', '-3.75', '0.58', '4.39', '-3.81'],
  ['Party', '756', '25', '3.77', '-2.18', '5.95', '3.89', '1.69', '2.20', '18.83', '-10.91', '29.74'],
  ['iPoker', '295', '20', '-3.11', '0.09', '-3.19', '0.78', '1.77', '-0.99', '-12.43', '0.34', '-12.77']
];

function cellClass(r, c, text) {
  const k = [];
  const num = text !== '' && !isNaN(text);
  if (num) k.push('n');
  if (r === 0 || (r === 1 && c < 11)) k.push('b');
  if (r > 0 && r < 8 && c > 2 && c < 12) {
    if (num && Number(text) < 0) k.push('r');
    else if (c < 11) k.push('g');
  }
  if (r < 8 && [2, 5, 8, 11].includes(c)) k.push('edge');
  if (r === 6 && c > 2 && c < 12) k.push('line');
  if ((r === 5 || r === 6) && (c === 9 || c === 10)) k.push('pale');
  if (r === 7 && (c === 9 || c === 10)) k.push('hi');
  if (r === 1 && c === 2) k.push('flag');
  if (r === 1 && c === 9) k.push('sel');
  return k.join(' ');
}

let html = '<colgroup>' + widths.map(w => `<col style="width:${w}px">`).join('') + '</colgroup><thead><tr><th></th>';
html += letters.map(l => `<th scope="col"${l === 'J' ? ' class="hot"' : ''}>${l}</th>`).join('') + '</tr></thead><tbody>';
for (let r = 0; r < 28; r++) {
  html += `<tr><th scope="row"${r === 1 ? ' class="hot"' : ''}>${r + 1}</th>`;
  for (let c = 0; c < 24; c++) {
    const text = (rows[r] && rows[r][c]) || '';
    html += `<td class="${cellClass(r, c, text)}">${text}</td>`;
  }
  html += '</tr>';
}
document.getElementById('grid').innerHTML = html + '</tbody>';

const step = 453 / 39;
const px = n => Math.round(776.5 + step * (n - 0.5));
const py = v => Math.round(380.5 - 33.3 * v);
let ticks = '', labels = '';
for (let i = 1; i <= 39; i++) {
  ticks += `M${Math.round(777 + step * i) + 0.5} 382v4`;
  if (i % 2) labels += `<text x="${px(i)}" y="405">${i}</text>`;
}
document.getElementById('ticks').setAttribute('d', ticks);
document.getElementById('xlabels').innerHTML = labels;

const marks = {
  star: (x, y) => `<path class="smooth" d="M${x - 3} ${y - 3}l6 6M${x + 3} ${y - 3}l-6 6M${x} ${y - 3}v6" stroke="#40e0d8"/>`,
  diamond: (x, y) => `<path class="smooth" d="M${x} ${y - 4}l4 4-4 4-4-4z" fill="#000080"/>`,
  square: (x, y) => `<path d="M${x - 3} ${y - 3}h6v6h-6z" fill="#f0f"/>`
};
const series = [
  { v: [-0.19, -2.08, 0.01, 0.12, 3.89, 0.78], color: '#339980', mark: 'star' },
  { v: [2.84, 2.39, 2.99, 3.87, 1.69, 1.77], color: '#000080', mark: 'diamond' },
  { v: [-3.03, -4.47, -2.98, -3.75, 2.2, -0.99], color: '#f0f', mark: 'square' }
];
document.getElementById('series').innerHTML = series.map(s => {
  const pts = s.v.map((v, i) => [px(i + 1), py(v)]);
  return `<path class="smooth" d="M${pts.map(p => p.join(' ')).join('L')}" fill="none" stroke="${s.color}"/>` +
    pts.map(p => marks[s.mark](p[0], p[1])).join('');
}).join('');
```
